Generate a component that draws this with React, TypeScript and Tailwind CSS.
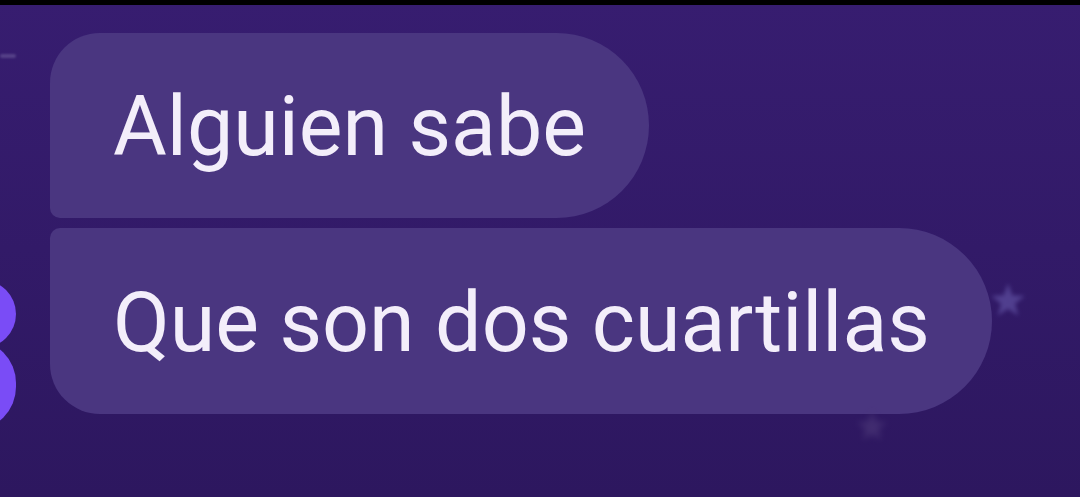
import React from "react";

function Star({ className }: { className: string }) {
  return (
    <svg viewBox="0 0 24 24" className={className} aria-hidden="true">
      <path
        d="M12 2 L14.6 9.2 L22 9.6 L16.2 14.2 L18.2 21.4 L12 17.3 L5.8 21.4 L7.8 14.2 L2 9.6 L9.4 9.2 Z"
        fill="currentColor"
      />
    </svg>
  );
}

export default function App() {
  return (
    <div
      className="relative w-[1080px] h-[497px] overflow-hidden bg-gradient-to-b from-[#371d70] via-[#321a68] to-[#2d175f]"
      style={{ fontFamily: "Roboto, 'Noto Sans', sans-serif" }}
    >
      <div className="h-[5px] bg-black" />

      {/* background decorations */}
      <div className="absolute left-0 top-[54px] w-[16px] h-[4px] rounded-full bg-[#6a5a99] opacity-60 blur-[1px]" />
      <Star className="absolute left-[988px] top-[280px] w-[40px] h-[40px] text-[#5e4fa0] opacity-70 blur-[2px]" />
      <Star className="absolute left-[852px] top-[408px] w-[40px] h-[36px] text-[#4e3a7a] opacity-60 blur-[3px]" />
      <div className="absolute left-[-70px] top-[280px] w-[86px] h-[68px] rounded-full bg-[#7a4cf6]" />
      <div className="absolute left-[-70px] top-[340px] w-[86px] h-[90px] rounded-full bg-[#7a4cf6]" />

      <div className="flex flex-col items-start gap-[10px] pl-[50px] pt-[28px]">
        <div className="flex items-center h-[185px] pl-[63px] pr-[63px] pt-[4px] bg-[#4a3680] rounded-tl-[50px] rounded-bl-[10px] rounded-r-[93px]">
          <span className="text-[82.5px] leading-none text-[#f3eefa]">
            Alguien sabe
          </span>
        </div>
        <div className="flex items-center h-[186px] pl-[63px] pr-[62px] pt-[4px] bg-[#4a3680] rounded-tl-[10px] rounded-bl-[50px] rounded-r-[93px]">
          <span className="text-[82.5px] leading-none text-[#f3eefa]">
            Que son dos cuartillas
          </span>
        </div>
      </div>
    </div>
  );
}
